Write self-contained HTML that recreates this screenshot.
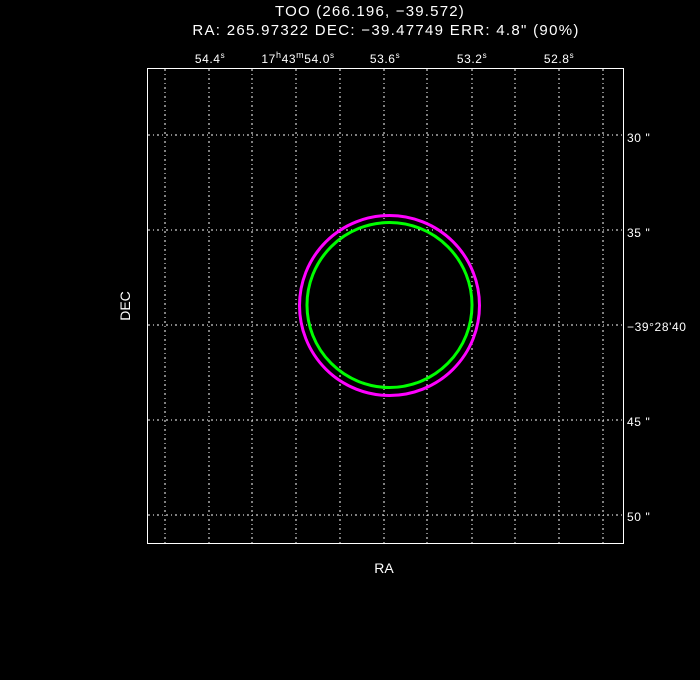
<!DOCTYPE html>
<html><head><style>body{margin:0;background:#000;}svg{display:block}</style></head><body>
<svg width="700" height="680" xmlns="http://www.w3.org/2000/svg" font-family="Liberation Sans, sans-serif" fill="#fff" xml:space="preserve">
<rect width="700" height="680" fill="#000"/>
<text x="370" y="16" font-size="15" text-anchor="middle" letter-spacing="1.2">TOO (266.196, −39.572)</text>
<text x="386" y="35" font-size="15" text-anchor="middle" letter-spacing="1.3">RA: 265.97322  DEC: −39.47749  ERR: 4.8" (90%)</text>
<g font-size="12" text-anchor="middle" letter-spacing="0.6">
<text x="210" y="63">54.4<tspan font-size="8" dy="-5">s</tspan></text>
<text x="298" y="63">17<tspan font-size="9" dy="-5">h</tspan><tspan dy="5">43</tspan><tspan font-size="9" dy="-5">m</tspan><tspan dy="5">54.0</tspan><tspan font-size="8" dy="-5">s</tspan></text>
<text x="385" y="63">53.6<tspan font-size="8" dy="-5">s</tspan></text>
<text x="472" y="63">53.2<tspan font-size="8" dy="-5">s</tspan></text>
<text x="559" y="63">52.8<tspan font-size="8" dy="-5">s</tspan></text>
</g>
<g font-size="12" letter-spacing="0.6">
<text x="627" y="142">30 "</text>
<text x="627" y="237">35 "</text>
<text x="627" y="331">−39°28'40</text>
<text x="627" y="426">45 "</text>
<text x="627" y="521">50 "</text>
</g>
<text x="384" y="573" font-size="14" text-anchor="middle">RA</text>
<text x="130" y="306" font-size="14" text-anchor="middle" transform="rotate(-90 130 306)">DEC</text>
<g stroke="#fff" stroke-width="1" stroke-dasharray="2,3,1,3">
<line x1="165" y1="69" x2="165" y2="543"/>
<line x1="209" y1="69" x2="209" y2="543"/>
<line x1="252" y1="69" x2="252" y2="543"/>
<line x1="296" y1="69" x2="296" y2="543"/>
<line x1="340" y1="69" x2="340" y2="543"/>
<line x1="384" y1="69" x2="384" y2="543"/>
<line x1="427" y1="69" x2="427" y2="543"/>
<line x1="472" y1="69" x2="472" y2="543"/>
<line x1="515" y1="69" x2="515" y2="543"/>
<line x1="559" y1="69" x2="559" y2="543"/>
<line x1="603" y1="69" x2="603" y2="543"/>
<line x1="148" y1="135" x2="623" y2="135"/>
<line x1="148" y1="230" x2="623" y2="230"/>
<line x1="148" y1="325" x2="623" y2="325"/>
<line x1="148" y1="420" x2="623" y2="420"/>
<line x1="148" y1="515" x2="623" y2="515"/>
</g>
<rect x="147.5" y="68.5" width="476" height="475" fill="none" stroke="#fff" stroke-width="1"/>
<circle cx="389.5" cy="305.5" r="90" fill="none" stroke="#ff00ff" stroke-width="3"/>
<circle cx="389.5" cy="305" r="82.5" fill="none" stroke="#00ff00" stroke-width="3"/>
</svg>
</body></html>
